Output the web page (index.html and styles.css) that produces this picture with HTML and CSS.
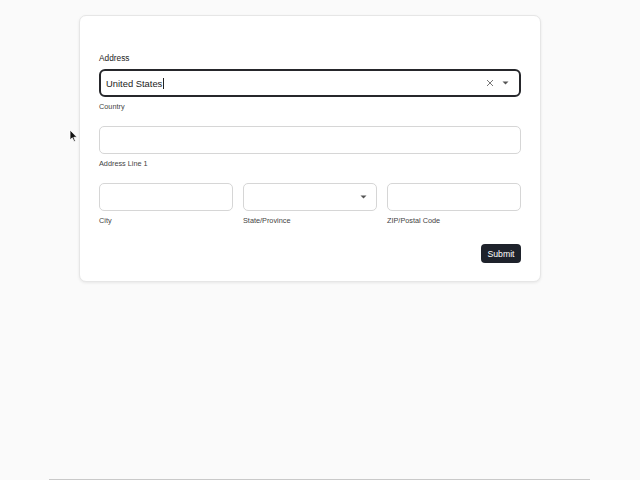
FILE: index.html
```html
<!DOCTYPE html>
<html>
<head>
<meta charset="utf-8">
<link rel="stylesheet" href="styles.css">
</head>
<body>
<div class="page">
  <form class="card">
    <div class="section-label">Address</div>
    <div class="field">
      <div class="input focused">
        <span class="value">United States</span><span class="caret-line"></span>
        <span class="icons">
          <svg class="clear" width="8" height="8" viewBox="0 0 8 8"><path d="M1 1L7 7M7 1L1 7" stroke="#777" stroke-width="1" fill="none"/></svg>
          <svg class="tri" width="7" height="4" viewBox="0 0 7 4"><path d="M0.5 0.5H6.5L3.5 3.5Z" fill="#555"/></svg>
        </span>
      </div>
      <div class="hint">Country</div>
    </div>
    <div class="field">
      <div class="input"></div>
      <div class="hint">Address Line 1</div>
    </div>
    <div class="row">
      <div class="field">
        <div class="input"></div>
        <div class="hint">City</div>
      </div>
      <div class="field">
        <div class="input select">
          <svg class="tri" width="7" height="4" viewBox="0 0 7 4"><path d="M0.5 0.5H6.5L3.5 3.5Z" fill="#555"/></svg>
        </div>
        <div class="hint">State/Province</div>
      </div>
      <div class="field">
        <div class="input"></div>
        <div class="hint">ZIP/Postal Code</div>
      </div>
    </div>
    <div class="actions">
      <button type="button" class="submit">Submit</button>
    </div>
  </form>
</div>
<svg class="pointer" width="9" height="14" viewBox="0 0 9 14"><path d="M1 1L1 11L3.3 8.8L5 12.5L6.4 11.9L4.8 8.3L8 8.3Z" fill="#111" stroke="#fff" stroke-width="0.8"/></svg>
</body>
</html>
```

FILE: styles.css
```css
html, body {
  margin: 0;
  padding: 0;
}
body {
  background: #fafafa;
  font-family: "Liberation Sans", Arial, sans-serif;
  color: #222;
  position: relative;
  width: 640px;
  height: 480px;
  overflow: hidden;
}
.page {
  box-sizing: border-box;
  width: 541px;
  height: 480px;
  margin-left: 49px;
  padding-top: 15px;
  padding-left: 30px;
  border-bottom: 1px solid #c9c9c9;
}
.card {
  box-sizing: border-box;
  width: 462px;
  margin: 0;
  background: #fff;
  border: 1px solid #e6e6e6;
  border-radius: 7px;
  box-shadow: 0 1px 3px rgba(0, 0, 0, 0.08);
  padding: 37px 19px 18px 19px;
  display: flex;
  flex-direction: column;
}
.section-label {
  font-size: 8.3px;
  line-height: 10px;
  color: #222;
  margin-bottom: 6px;
}
.field {
  display: flex;
  flex-direction: column;
}
.card > .field + .field, .card > .field + .row {
  margin-top: 15px;
}
.input {
  box-sizing: border-box;
  height: 28px;
  border: 1px solid #d6d6d6;
  border-radius: 5px;
  background: #fff;
  display: flex;
  align-items: center;
}
.input.focused {
  border: 2px solid #26272b;
  border-radius: 6px;
  padding-left: 5px;
  padding-right: 10px;
}
.value {
  font-size: 9.4px;
  color: #222;
}
.caret-line {
  display: inline-block;
  width: 1px;
  height: 11px;
  background: #222;
  margin-left: 0.5px;
}
.icons {
  margin-left: auto;
  display: flex;
  align-items: center;
  gap: 8px;
}
.input.select {
  justify-content: flex-end;
  padding-right: 9px;
}
.hint {
  font-size: 7.3px;
  line-height: 9px;
  color: #444;
  margin-top: 5px;
}
.row {
  display: grid;
  grid-template-columns: 1fr 1fr 1fr;
  column-gap: 10px;
}
.actions {
  display: flex;
  justify-content: flex-end;
  margin-top: 19px;
}
.submit {
  font-family: "Liberation Sans", Arial, sans-serif;
  font-size: 8.7px;
  color: #fff;
  background: #1e222b;
  border: none;
  border-radius: 4px;
  height: 19px;
  width: 40px;
  padding: 0;
  cursor: pointer;
}
.pointer {
  position: absolute;
  left: 69px;
  top: 129px;
}
```
